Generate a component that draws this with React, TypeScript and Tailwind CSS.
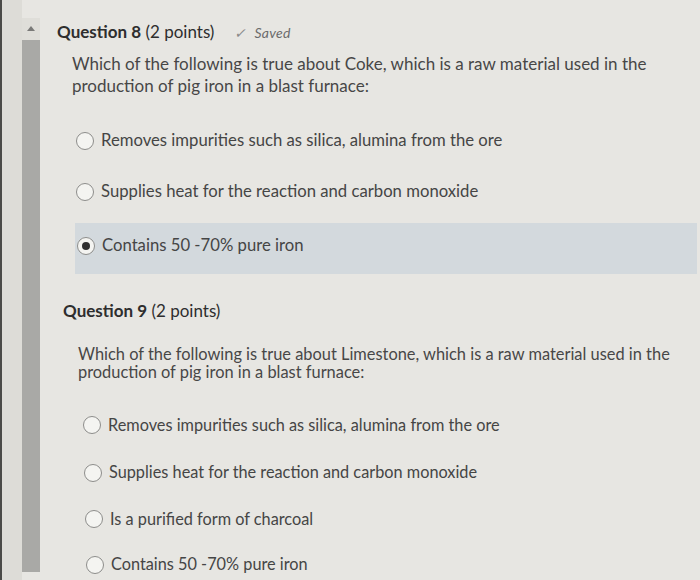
import React from "react";

function Radio({ checked }: { checked?: boolean }) {
  return (
    <span className="flex h-[18px] w-[18px] shrink-0 items-center justify-center rounded-full border-[1.5px] border-[#8d8d8b] bg-[#f4f4f1]">
      {checked && <span className="h-[8px] w-[8px] rounded-full bg-[#2f2f2f]" />}
    </span>
  );
}

export default function App() {
  return (
    <div
      className="flex h-[580px] w-[700px] overflow-hidden bg-[#e7e6e2]"
      style={{ fontFamily: "Lato, 'Open Sans', sans-serif" }}
    >
      <div className="w-[2px] shrink-0 bg-[#4a4a48]" />
      <div className="w-[20px] shrink-0 bg-[#dddcd7]" />
      {/* scrollbar */}
      <div className="flex w-[18px] shrink-0 flex-col pt-[18px] pb-[8px]">
        <div className="flex h-[22px] items-start justify-center bg-[#dfded9] pt-[8px]">
          <span className="h-0 w-0 border-x-[4px] border-b-[5px] border-x-transparent border-b-[#7a7a78]" />
        </div>
        <div className="flex-1 bg-[#a9a9a6]" />
      </div>
      <div className="flex-1 pl-[17px] pr-[3px]">
        {/* Question 8 */}
        <div className="flex items-baseline gap-[20px] pt-[21px] text-[17px] leading-[22px] text-[#2e2e2e]">
          <div>
            <span className="font-bold">Question 8</span> (2 points)
          </div>
          <div className="flex items-center gap-[8px] text-[14px] italic text-[#6b6b6b]">
            <span className="text-[#8a8a8a]">✓</span>
            <span className="tracking-[0.3px]">Saved</span>
          </div>
        </div>
        <div className="mt-[9px] pl-[15px] text-[17px] leading-[22px] text-[#474747]">
          Which of the following is true about Coke, which is a raw material used in the
          <br />
          production of pig iron in a blast furnace:
        </div>
        <div className="mt-[18px] flex flex-col text-[16.7px] text-[#454545]">
          <div className="flex h-[51px] items-center gap-[7px] pl-[19px]">
            <Radio />
            <span>Removes impurities such as silica, alumina from the ore</span>
          </div>
          <div className="flex h-[51px] items-center gap-[7px] pl-[19px]">
            <Radio />
            <span>Supplies heat for the reaction and carbon monoxide</span>
          </div>
          <div className="ml-[18px] mt-[6px] flex h-[51px] items-center gap-[7px] bg-[#d3d9dd] pb-[5px] pl-[2px]">
            <Radio checked />
            <span>Contains 50 -70% pure iron</span>
          </div>
        </div>
        {/* Question 9 */}
        <div className="mt-[26px] pl-[6px] text-[17px] leading-[22px] text-[#2e2e2e]">
          <span className="font-bold">Question 9</span> (2 points)
        </div>
        <div className="mt-[23px] pl-[21px] text-[16.4px] leading-[18px] text-[#474747]">
          Which of the following is true about Limestone, which is a raw material used in the
          <br />
          production of pig iron in a blast furnace:
        </div>
        <div className="mt-[20px] flex flex-col text-[16.3px] text-[#454545]">
          <div className="flex h-[48px] items-center gap-[7px] pl-[26px]">
            <Radio />
            <span>Removes impurities such as silica, alumina from the ore</span>
          </div>
          <div className="flex h-[47px] items-center gap-[7px] pl-[27px]">
            <Radio />
            <span>Supplies heat for the reaction and carbon monoxide</span>
          </div>
          <div className="flex h-[46px] items-center gap-[7px] pl-[28px]">
            <Radio />
            <span>Is a purified form of charcoal</span>
          </div>
          <div className="flex h-[45px] items-center gap-[7px] pl-[29px]">
            <Radio />
            <span>Contains 50 -70% pure iron</span>
          </div>
        </div>
      </div>
    </div>
  );
}
